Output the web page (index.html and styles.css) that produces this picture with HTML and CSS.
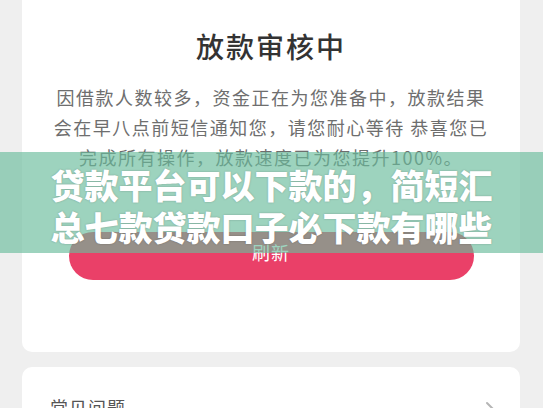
FILE: index.html
```html
<!DOCTYPE html>
<html lang="zh-CN">
<head>
    <meta charset="UTF-8">
    <meta name="viewport" content="width=device-width, initial-scale=1.0">
    <title>放款审核中</title>
    <link rel="stylesheet" href="styles.css">
</head>
<body>

<div class="page">
    <div class="card status-card">
        <h1>放款审核中</h1>
        <p class="status-text">因借款人数较多，资金正在为您准备中，放款结果会在早八点前短信通知您，请您耐心等待 恭喜您已完成所有操作，放款速度已为您提升100%。</p>
        <button class="refresh-btn">刷新</button>
    </div>

    <div class="card faq-card">
        <span class="faq-title">常见问题</span>
        <svg class="chevron" width="12" height="20" viewBox="0 0 12 20">
            <path d="M2 2 L10 10 L2 18" fill="none" stroke="#b5b5b5" stroke-width="2" stroke-linecap="round" stroke-linejoin="round"/>
        </svg>
    </div>
</div>

<div class="banner">
    <div class="banner-text">贷款平台可以下款的，简短汇总七款贷款口子必下款有哪些</div>
</div>

</body>
</html>
```

FILE: styles.css
```css
body {
    margin: 0;
    background-color: #efefef;
    font-family: "Noto Sans CJK SC", "Noto Sans", sans-serif;
    overflow: hidden;
}
.page {
    padding: 0 23px 0 22px;
}
.card {
    background: #ffffff;
    border-radius: 10px;
}
.status-card {
    margin-top: -20px;
    padding: 46px 29px 72px;
    text-align: center;
}
h1 {
    margin: 0;
    font-size: 28px;
    line-height: 40px;
    font-weight: 500;
    letter-spacing: 2px;
    color: #333333;
}
.status-text {
    margin: 16px 0 0;
    font-size: 18px;
    line-height: 30px;
    letter-spacing: 1.5px;
    color: #6e6e6e;
}
.refresh-btn {
    display: block;
    width: 405px;
    height: 48px;
    margin: 60px auto 0;
    padding: 0 0 8px;
    border: none;
    border-radius: 24px;
    background-color: #ea4068;
    color: #ffffff;
    font-family: inherit;
    font-size: 18px;
    letter-spacing: 1px;
}
.faq-card {
    margin-top: 15px;
    padding: 26px 23px 26px 28px;
    display: flex;
    justify-content: space-between;
    align-items: center;
}
.faq-title {
    font-size: 18px;
    line-height: 24px;
    letter-spacing: 1px;
    color: #555555;
}
.chevron {
    margin-top: 8px;
}
/* overlay band across the page */
.banner {
    position: absolute;
    top: 152px;
    left: 0;
    right: 0;
    height: 101px;
    background-color: rgba(105, 188, 155, 0.65);
    display: flex;
    justify-content: center;
    align-items: center;
}
.banner-text {
    width: 450px;
    margin-top: 6px;
    text-align: center;
    font-size: 34px;
    line-height: 42px;
    font-weight: 900;
    color: #ffffff;
    text-shadow: 0 0 2px rgba(0, 0, 0, 0.25);
}
```
